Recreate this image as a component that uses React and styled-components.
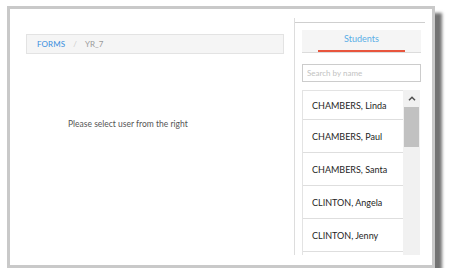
import React from "react";
import styled, { createGlobalStyle } from "styled-components";

const Global = createGlobalStyle`
  html, body { margin: 0; padding: 0; background: #ffffff; }
  body { font-family: Lato, "Open Sans", Arial, sans-serif; }
  * { box-sizing: border-box; }
`;

const Frame = styled.div`
  margin: 6px 0 0 7px;
  width: 428px;
  height: 262px;
  border: 3px solid #c9c9c9;
  background: #ffffff;
  box-shadow: 7px 7px 3px rgba(0, 0, 0, 0.55);
  display: flex;
`;

const Main = styled.div`
  flex: 1;
  padding: 25px 10px 0 16px;
  display: flex;
  flex-direction: column;
`;

const Breadcrumb = styled.div`
  height: 20px;
  background: #f5f5f5;
  border: 1px solid #e3e3e3;
  display: flex;
  align-items: center;
  gap: 8px;
  padding: 0 0 1px 10px;
  font-size: 8px;
  letter-spacing: 0.1px;
`;

const Crumb = styled.span`
  color: ${(p) => (p.$active ? "#3a8ede" : "#9a9a9a")};
`;

const Sep = styled.span`
  color: #cccccc;
`;

const Placeholder = styled.div`
  margin: 65px 0 0 42px;
  font-size: 8.5px;
  color: #555555;
`;

const Side = styled.div`
  width: 131px;
  margin: 9px 7px 10px 0;
  border-left: 1px solid #dddddd;
  display: flex;
  flex-direction: column;
`;

const TopRule = styled.div`
  margin-top: 4px;
  height: 1px;
  background: #cfcfcf;
`;

const SideBody = styled.div`
  padding: 7px 4px 0 7px;
  display: flex;
  flex-direction: column;
  flex: 1;
  min-height: 0;
`;

const Tab = styled.div`
  width: 119px;
  height: 23px;
  background: #f5f5f5;
  border-bottom: 1px solid #dcdcdc;
  display: flex;
  flex-direction: column;
  align-items: center;
  justify-content: space-between;
  padding-top: 3px;
`;

const TabLabel = styled.span`
  font-size: 9px;
  color: #5aaee6;
`;

const TabLine = styled.div`
  width: 87px;
  height: 2px;
  background: #e8553d;
`;

const Search = styled.input`
  margin-top: 11px;
  width: 119px;
  height: 18px;
  border: 1px solid #cccccc;
  font-family: Lato, Arial, sans-serif;
  font-size: 8px;
  padding: 0 4px;
  outline: none;
  &::placeholder { color: #c2c2c2; }
`;

const ListWrap = styled.div`
  margin-top: 8px;
  width: 118px;
  flex: 1;
  min-height: 0;
  display: flex;
  overflow: hidden;
`;

const List = styled.div`
  width: 101px;
  border-left: 1px solid #e3e3e3;
  border-top: 1px solid #e3e3e3;
  display: flex;
  flex-direction: column;
`;

const Item = styled.div`
  flex: none;
  height: ${(p) => (p.$first ? "29px" : "33px")};
  border-bottom: 1px solid #dedede;
  display: flex;
  align-items: center;
  padding: 0 0 0 9px;
  font-size: 9px;
  color: #1e1e1e;
  white-space: nowrap;
`;

const Scrollbar = styled.div`
  width: 17px;
  background: #f1f1f1;
  display: flex;
  flex-direction: column;
  align-items: center;
`;

const Arrow = styled.div`
  height: 17px;
  width: 100%;
  display: flex;
  align-items: center;
  justify-content: center;
`;

const Thumb = styled.div`
  width: 15px;
  height: 40px;
  background: #c1c1c1;
`;

const names = [
  "CHAMBERS, Linda",
  "CHAMBERS, Paul",
  "CHAMBERS, Santa",
  "CLINTON, Angela",
  "CLINTON, Jenny",
  "",
];

export default function App() {
  return (
    <>
      <Global />
      <Frame>
        <Main>
          <Breadcrumb>
            <Crumb $active>FORMS</Crumb>
            <Sep>/</Sep>
            <Crumb>YR_7</Crumb>
          </Breadcrumb>
          <Placeholder>Please select user from the right</Placeholder>
        </Main>
        <Side>
          <TopRule />
          <SideBody>
            <Tab>
              <TabLabel>Students</TabLabel>
              <TabLine />
            </Tab>
            <Search placeholder="Search by name" />
            <ListWrap>
              <List>
                {names.map((n, i) => (
                  <Item key={i} $first={i === 0}>
                    {n}
                  </Item>
                ))}
              </List>
              <Scrollbar>
                <Arrow>
                  <svg width="8" height="5" viewBox="0 0 8 5">
                    <path d="M1 4.2 L4 1.2 L7 4.2" fill="none" stroke="#505050" strokeWidth="1.5" />
                  </svg>
                </Arrow>
                <Thumb />
              </Scrollbar>
            </ListWrap>
          </SideBody>
        </Side>
      </Frame>
    </>
  );
}
